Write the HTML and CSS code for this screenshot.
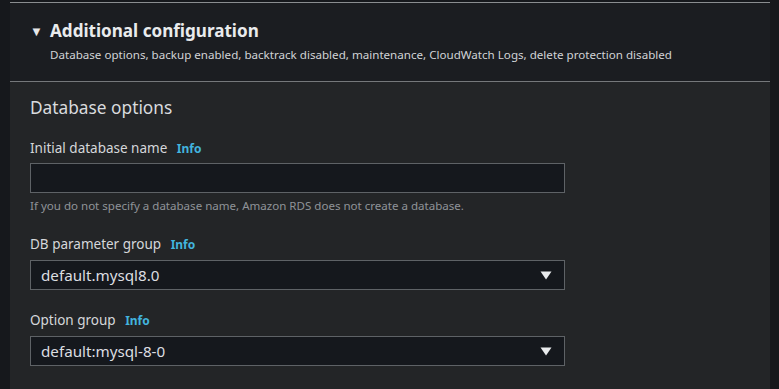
FILE: index.html
```html
<!DOCTYPE html>
<html lang="en">
<head>
    <meta charset="UTF-8">
    <meta name="viewport" content="width=device-width, initial-scale=1.0">
    <title>Additional configuration</title>
    <link rel="stylesheet" href="styles.css">
</head>
<body>
    <div class="panel">
        <div class="expander">
            <div class="expander-title">
                <span class="caret">&#9660;</span>
                <h2>Additional configuration</h2>
            </div>
            <p class="expander-desc">Database options, backup enabled, backtrack disabled, maintenance, CloudWatch Logs, delete protection disabled</p>
        </div>

        <div class="section">
            <h3>Database options</h3>

            <div class="field">
                <label>Initial database name <a href="#" class="info">Info</a></label>
                <input type="text" class="text-input">
                <p class="hint">If you do not specify a database name, Amazon RDS does not create a database.</p>
            </div>

            <div class="field">
                <label>DB parameter group <a href="#" class="info">Info</a></label>
                <div class="select">
                    <span>default.mysql8.0</span>
                    <svg class="arrow" width="12" height="9" viewBox="0 0 12 9"><path d="M0.5 0.5h11L6 8.5z" fill="#e9ebed"/></svg>
                </div>
            </div>

            <div class="field">
                <label>Option group <a href="#" class="info">Info</a></label>
                <div class="select">
                    <span>default:mysql-8-0</span>
                    <svg class="arrow" width="12" height="9" viewBox="0 0 12 9"><path d="M0.5 0.5h11L6 8.5z" fill="#e9ebed"/></svg>
                </div>
            </div>
        </div>
    </div>
</body>
</html>
```

FILE: styles.css
```css
* {
    margin: 0;
    padding: 0;
    box-sizing: border-box;
    font-family: 'Noto Sans', 'Open Sans', sans-serif;
}

:root {
    --page-bg: #16181c;
    --header-bg: #1b1d21;
    --body-bg: #232527;
    --input-bg: #15181d;
    --border: #5e6266;
    --text: #d5d7da;
    --muted: #8f9398;
    --link: #42b4de;
}

body {
    background: var(--page-bg);
    color: var(--text);
    padding-top: 2px;
    height: 389px;
    overflow: hidden;
}

.panel {
    margin: 0 9px 0 10px;
    border-top: 1px solid #8a8d90;
    background: var(--body-bg);
    height: 387px;
    overflow: hidden;
}

.expander {
    background: var(--header-bg);
    border-bottom: 1px solid #75787b;
    padding: 16px 20px 16px 20px;
    height: 79px;
}

.expander-title {
    display: flex;
    align-items: center;
    gap: 8px;
}

.caret {
    font-size: 13px;
    color: #e6e7e9;
    width: 12px;
    line-height: 1;
}

.expander-title h2 {
    font-size: 17.1px;
    font-weight: 700;
    color: #e9ebed;
    line-height: 24px;
}

.expander-desc {
    font-size: 11.6px;
    line-height: 18px;
    padding-left: 20px;
    margin-top: 3px;
    color: #d1d3d6;
}

.section {
    padding: 13px 20px 20px 20px;
    width: 575px;
}

.section h3 {
    font-size: 17.3px;
    font-weight: 400;
    line-height: 26px;
    color: #d9dbde;
    margin-bottom: 17px;
}

.field {
    margin-bottom: 20px;
}

.field:first-of-type {
    margin-bottom: 19px;
}

.field label {
    display: block;
    font-size: 13.5px;
    line-height: 20px;
    margin-bottom: 4px;
    color: #d5d7da;
}

.field:not(:first-of-type) label {
    margin-bottom: 5px;
}

.info {
    font-size: 12px;
    font-weight: 700;
    color: var(--link);
    text-decoration: none;
    margin-left: 6px;
}

.text-input {
    display: block;
    width: 100%;
    height: 30px;
    background: var(--input-bg);
    border: 1px solid var(--border);
    outline: none;
}

.hint {
    font-size: 11.55px;
    line-height: 18px;
    color: var(--muted);
    margin-top: 4px;
}

.select {
    height: 30px;
    background: var(--input-bg);
    border: 1px solid var(--border);
    display: flex;
    align-items: center;
    justify-content: space-between;
    padding: 0 12px 0 10px;
    font-size: 15.2px;
    color: #dcdee1;
}
```
